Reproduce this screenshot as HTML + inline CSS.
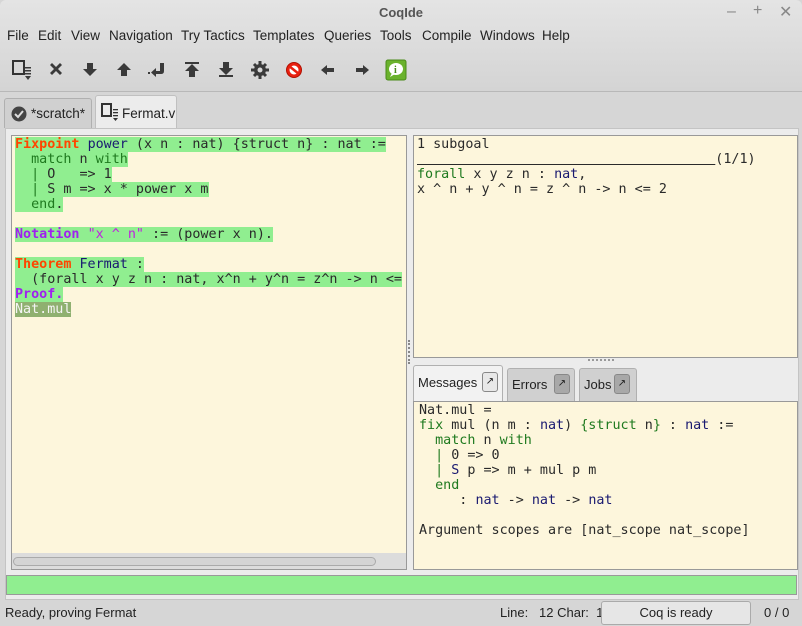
<!DOCTYPE html>
<html><head><meta charset="utf-8"><style>
*{margin:0;padding:0;box-sizing:border-box}
body{width:802px;height:626px;overflow:hidden;background:#d6d6d6;font-family:"Liberation Sans","DejaVu Sans",sans-serif;font-size:13px;color:#2a2a2a;position:relative}
.a{position:absolute;white-space:nowrap}
.mono{font-family:"DejaVu Sans Mono","Liberation Mono",monospace;font-size:13.4px;line-height:15px;white-space:pre}
.ln{display:block;height:15px}
.g{background:#90ee90}
.kw{color:#ff4500;font-weight:bold}
.id{color:#191970}
.gr{color:#1f7a1f}
.pu{color:#a020f0;font-weight:bold}
.st{color:#c020e0}
.nv{color:#191970}
.menu span{position:absolute;top:0;white-space:nowrap}
.tab{position:absolute;border:1px solid #b0b0b0;border-bottom:none;border-radius:3px 3px 0 0;background:#d0d0d0}
.btn{position:absolute;width:16px;height:20px;border:1px solid #888;border-radius:3px;background:#a8a8a8;font-size:10px;text-align:center;line-height:18px;color:#222}
</style></head><body>
<div class="a" style="left:0;top:0;width:802px;height:92px;background:linear-gradient(#e4e4e4,#d4d4d4);border-bottom:1px solid #b8b8b8;border-radius:6px 6px 0 0"></div>
<div class="a" style="left:0;top:5px;width:802px;text-align:center;font-weight:bold;color:#555;font-size:13px">CoqIde</div>
<div class="a" style="left:727px;top:3px;color:#888;font-size:16px">–</div>
<div class="a" style="left:753px;top:2px;color:#888;font-size:16px">+</div>
<div class="a" style="left:779px;top:2px;color:#888;font-size:16px">✕</div>
<div class="a menu" style="left:0;top:28px;font-size:13.5px;color:#222">
<span style="left:7px">File</span><span style="left:38px">Edit</span><span style="left:71px">View</span><span style="left:109px">Navigation</span><span style="left:181px">Try Tactics</span><span style="left:253px">Templates</span><span style="left:324px">Queries</span><span style="left:380px">Tools</span><span style="left:422px">Compile</span><span style="left:480px">Windows</span><span style="left:542px">Help</span>
</div>
<svg class="a" style="left:0;top:55px" width="420" height="32" viewBox="0 55 420 32">
<g fill="#3a3a3a" stroke="none">
<rect x="13" y="61" width="11" height="13" fill="none" stroke="#333" stroke-width="2"/>
<rect x="25" y="67" width="6" height="1.5"/><rect x="25" y="70" width="6" height="1.5"/><rect x="25" y="73" width="6" height="1.5"/>
<path d="M25 76h6l-3 4z"/>
<path d="M50 65l2-2 4 4 4-4 2 2-4 4 4 4-2 2-4-4-4 4-2-2 4-4z"/>
<path d="M87 63h6v6h4l-7 7-7-7h4z"/>
<path d="M121 76h6v-6h4l-7-7-7 7h4z"/>
<path d="M160 63h4v8q0 3-3 3h-5v3l-5-4.5 5-4.5v3h4z"/><rect x="148" y="72" width="2" height="2"/>
<rect x="185" y="62" width="14" height="2"/><path d="M189 77h6v-6h4l-7-7-7 7h4z"/>
<rect x="219" y="75" width="14" height="2"/><path d="M223 62h6v6h4l-7 7-7-7h4z"/>
<circle cx="260" cy="70" r="6"/><g stroke="#3a3a3a" stroke-width="3"><path d="M260 61v18M251 70h18M254 64l12 12M266 64l-12 12"/></g><circle cx="260" cy="70" r="2.5" fill="#d8d8d8"/>
</g>
<circle cx="294" cy="70" r="7.5" fill="#e82010" stroke="#b01000"/><circle cx="294" cy="70" r="4.5" fill="#fff"/><path d="M289 66l10 8" stroke="#e82010" stroke-width="2.5"/>
<path d="M321 70l6-5v3h7v4h-7v3z" fill="#3a3a3a"/>
<path d="M369 70l-6-5v3h-7v4h7v3z" fill="#3a3a3a"/>
<rect x="386" y="60" width="20" height="20" rx="2" fill="#6ab22c" stroke="#4a8a1a"/>
<ellipse cx="396" cy="69" rx="7" ry="6" fill="#fff"/><path d="M392 73l-2 4 5-3z" fill="#fff"/>
<text x="394" y="73" font-family="Liberation Serif" font-weight="bold" font-size="10" fill="#4a8a1a">i</text>
</svg>
<div class="tab" style="left:4px;top:98px;width:88px;height:30px"></div>
<svg class="a" style="left:11px;top:106px" width="16" height="16"><circle cx="8" cy="8" r="7.5" fill="#444"/><path d="M4 8l3 3 5-6" stroke="#ddd" stroke-width="2" fill="none"/></svg>
<div class="a" style="left:31px;top:106px;color:#222;font-size:13.5px">*scratch*</div>
<div class="tab" style="left:95px;top:95px;width:82px;height:35px;background:#ececec;border-color:#c0c0c0"></div>
<svg class="a" style="left:101px;top:103px" width="20" height="20"><rect x="1" y="1" width="9" height="12" fill="none" stroke="#333" stroke-width="2"/><rect x="12" y="6" width="5" height="1.3" fill="#333"/><rect x="12" y="9" width="5" height="1.3" fill="#333"/><rect x="12" y="12" width="5" height="1.3" fill="#333"/><path d="M12 15h5l-2.5 3z" fill="#333"/></svg>
<div class="a" style="left:122px;top:106px;color:#222;font-size:13.5px">Fermat.v</div>
<div class="a" style="left:5px;top:128px;width:794px;height:472px;background:#ececec;border:1px solid #c4c4c4"></div>
<div class="a" style="left:11px;top:135px;width:396px;height:435px;border:1px solid #999;background:#fdf6dc"></div>
<div class="a" style="left:12px;top:553px;width:394px;height:16px;background:#dcdcdc"></div>
<div class="a" style="left:13px;top:557px;width:363px;height:9px;border:1px solid #aaa;border-radius:5px;background:#d4d4d4"></div>
<div class="a mono" style="left:15px;top:137px;color:#2a2a2a"><span class="ln"><span class="g"><span class="kw">Fixpoint</span> <span class="id">power</span> (x n : nat) {struct n} : nat :=</span></span><span class="ln"><span class="g">  <span class="gr">match</span> n <span class="gr">with</span></span></span><span class="ln"><span class="g">  <span class="gr">|</span> O   => 1</span></span><span class="ln"><span class="g">  <span class="gr">|</span> S m => x * power x m</span></span><span class="ln"><span class="g">  <span class="gr">end</span>.</span></span><span class="ln"> </span><span class="ln"><span class="g"><span class="pu">Notation</span> <span class="st">"x ^ n"</span> := (power x n).</span></span><span class="ln"> </span><span class="ln"><span class="g"><span class="kw">Theorem</span> <span class="id">Fermat</span> :</span></span><span class="ln"><span class="g">  (forall x y z n : nat, x^n + y^n = z^n -> n <=</span></span><span class="ln"><span class="g"><span class="pu">Proof.</span></span></span><span class="ln"><span style="background:#8fb070;color:#f4f4f4">Nat.mul</span></span></div>
<div class="a" style="left:408px;top:340px;width:2px;height:24px;border-left:2px dotted #888"></div>
<div class="a" style="left:413px;top:135px;width:385px;height:223px;border:1px solid #999;background:#fdf6dc"></div>
<div class="a mono" style="left:417px;top:137px;color:#2a2a2a"><span class="ln">1 subgoal</span><span class="ln"><span style="text-decoration:underline">                                     </span>(1/1)</span><span class="ln"><span class="gr">forall</span> x y z n : <span class="nv">nat</span>,</span><span class="ln">x ^ n + y ^ n = z ^ n -> n <= 2</span></div>
<div class="a" style="left:588px;top:359px;width:26px;border-top:2px dotted #999"></div>
<div class="tab" style="left:413px;top:365px;width:90px;height:37px;background:#f2f2f2"></div>
<div class="a" style="left:418px;top:375px;color:#222">Messages</div>
<div class="btn" style="left:482px;top:372px;background:#e8e8e8">↗</div>
<div class="tab" style="left:507px;top:368px;width:68px;height:33px"></div>
<div class="a" style="left:512px;top:377px;color:#222">Errors</div>
<div class="btn" style="left:554px;top:374px">↗</div>
<div class="tab" style="left:579px;top:368px;width:58px;height:33px"></div>
<div class="a" style="left:584px;top:377px;color:#222">Jobs</div>
<div class="btn" style="left:614px;top:374px">↗</div>
<div class="a" style="left:413px;top:401px;width:385px;height:169px;border:1px solid #999;background:#fdf6dc"></div>
<div class="a mono" style="left:419px;top:403px;color:#2a2a2a"><span class="ln">Nat.mul =</span><span class="ln"><span class="gr">fix</span> mul (n m : <span class="nv">nat</span>) <span class="gr">{struct</span> n<span class="gr">}</span> : <span class="nv">nat</span> :=</span><span class="ln">  <span class="gr">match</span> n <span class="gr">with</span></span><span class="ln">  <span class="gr">|</span> 0 => 0</span><span class="ln">  <span class="gr">|</span> <span class="nv">S</span> p => m + mul p m</span><span class="ln">  <span class="gr">end</span></span><span class="ln">     : <span class="nv">nat</span> -> <span class="nv">nat</span> -> <span class="nv">nat</span></span><span class="ln"> </span><span class="ln">Argument scopes are [nat_scope nat_scope]</span></div>
<div class="a" style="left:6px;top:575px;width:791px;height:20px;background:#90ee90;border:1px solid #999"></div>
<div class="a" style="left:0;top:601px;width:802px;height:25px;background:#d6d6d6"></div>
<div class="a" style="left:5px;top:605px;color:#222">Ready, proving Fermat</div>
<div class="a" style="left:500px;top:605px;color:#222">Line:&nbsp;&nbsp;&nbsp;12 Char:&nbsp;&nbsp;1</div>
<div class="a" style="left:601px;top:601px;width:150px;height:24px;border:1px solid #aaa;border-radius:3px;background:#e6e6e6;text-align:center;line-height:22px;color:#222">Coq is ready</div>
<div class="a" style="left:764px;top:605px;color:#222">0 / 0</div>
</body></html>
